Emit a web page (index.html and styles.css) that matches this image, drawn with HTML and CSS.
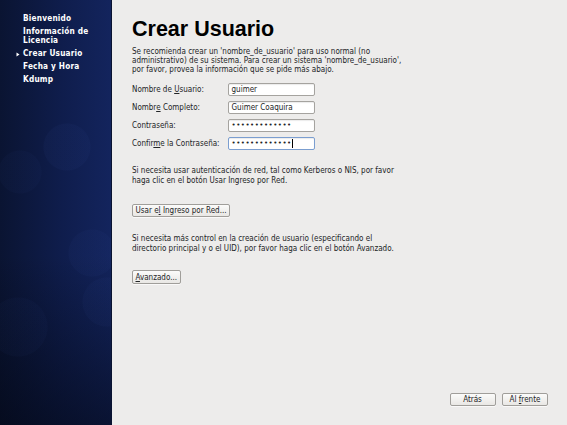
FILE: index.html
```html
<!DOCTYPE html>
<html lang="es">
<head>
<meta charset="utf-8">
<title>Crear Usuario</title>
<link rel="stylesheet" href="styles.css">
</head>
<body>
<div class="app">
  <nav class="sidebar">
    <ul class="steps">
      <li class="step"><span class="mark"></span><span class="step-text">Bienvenido</span></li>
      <li class="step"><span class="mark"></span><span class="step-text">Información de<br>Licencia</span></li>
      <li class="step active"><span class="mark"><svg width="4" height="5" viewBox="0 0 4 5"><path d="M0.5 0.5 L3.5 2.5 L0.5 4.5 Z" fill="#ffffff"/></svg></span><span class="step-text">Crear Usuario</span></li>
      <li class="step"><span class="mark"></span><span class="step-text">Fecha y Hora</span></li>
      <li class="step"><span class="mark"></span><span class="step-text">Kdump</span></li>
    </ul>
  </nav>
  <main class="content">
    <h1 class="title">Crear Usuario</h1>
    <p class="text intro">Se recomienda crear un 'nombre_de_usuario' para uso normal (no<br>administrativo) de su sistema. Para crear un sistema 'nombre_de_usuario',<br>por favor, provea la información que se pide más abajo.</p>
    <div class="form">
      <span class="label">Nombre de <u>U</u>suario:</span>
      <span class="field">guimer</span>
      <span class="label">Nombr<u>e</u> Completo:</span>
      <span class="field">Guimer Coaquira</span>
      <span class="label">Contraseña:</span>
      <span class="field pw">•••••••••••••</span>
      <span class="label">Confir<u>m</u>e la Contraseña:</span>
      <span class="field pw focus">•••••••••••••<span class="caret"></span></span>
    </div>
    <p class="text para2">Si necesita usar autenticación de red, tal como Kerberos o NIS, por favor<br>haga clic en el botón Usar Ingreso por Red.</p>
    <div class="btn-row first"><button class="btn">Usar e<u>l</u> Ingreso por Red...</button></div>
    <p class="text para3">Si necesita más control en la creación de usuario (especificando el<br>directorio principal y o el UID), por favor haga clic en el botón Avanzado.</p>
    <div class="btn-row second"><button class="btn"><u>A</u>vanzado...</button></div>
    <div class="footer">
      <button class="btn nav-btn">Atrás</button>
      <button class="btn nav-btn">Al <u>f</u>rente</button>
    </div>
  </main>
</div>
</body>
</html>
```
FILE: styles.css
```css
* { box-sizing: border-box; }
html, body { margin: 0; padding: 0; }
body {
  width: 567px;
  height: 425px;
  overflow: hidden;
  font-family: "DejaVu Sans Condensed", "DejaVu Sans", sans-serif;
  font-size: 8px;
  color: #222426;
  background: #edeceb;
}
.app {
  display: flex;
  height: 425px;
}
.sidebar {
  width: 112px;
  flex: 0 0 112px;
  height: 425px;
  border-right: 1px solid #0a1331;
  background:
    radial-gradient(circle at 67px 147px, rgba(70,100,190,0.05) 0 23px, transparent 24px),
    radial-gradient(circle at 20px 172px, rgba(70,100,190,0.035) 0 21px, transparent 22px),
    radial-gradient(circle at 92px 253px, rgba(70,100,190,0.045) 0 23px, transparent 24px),
    radial-gradient(circle at 107px 302px, rgba(70,100,190,0.045) 0 24px, transparent 25px),
    radial-gradient(circle at 18px 327px, rgba(70,100,190,0.035) 0 29px, transparent 30px),
    linear-gradient(to bottom, rgba(0,0,0,0) 0%, rgba(0,0,0,0) 60%, rgba(2,5,15,0.55) 100%),
    linear-gradient(to right, #0a1432 0%, #0f1d4c 55%, #13245d 100%);
  padding: 14px 0 0 16px;
}
.steps {
  list-style: none;
  margin: 0;
  padding: 0;
  display: flex;
  flex-direction: column;
  gap: 3.6px;
}
.step {
  display: flex;
  color: #ffffff;
  font-family: "DejaVu Sans Condensed", "DejaVu Sans", sans-serif;
  font-weight: bold;
  font-size: 8.2px;
  line-height: 9.4px;
  letter-spacing: 0.2px;
}
.mark {
  width: 7px;
  flex: 0 0 7px;
  display: flex;
  align-items: center;
  height: 9.4px;
}
.mark svg { display: block; }
.content {
  flex: 1;
  display: flex;
  flex-direction: column;
  padding: 16px 19px 19px 20px;
}
.title {
  margin: 0;
  font-family: "Liberation Sans", Arial, sans-serif;
  font-weight: bold;
  font-size: 21.5px;
  line-height: 26px;
  color: #000;
}
.text {
  margin: 0;
  line-height: 9.3px;
}
.intro { margin-top: 4.5px; }
.form {
  margin-top: 9px;
  display: grid;
  grid-template-columns: 96px 87px;
  row-gap: 4.8px;
  align-items: center;
}
.label { line-height: 13px; }
.field {
  display: flex;
  align-items: center;
  height: 13px;
  padding: 0 2.5px;
  background: #ffffff;
  border: 1px solid #a5a39f;
  border-radius: 2px;
  box-shadow: inset 0 1px 1px rgba(0,0,0,0.08);
  white-space: nowrap;
  overflow: hidden;
}
.pw {
  font-family: "DejaVu Sans", sans-serif;
  font-size: 7px;
  letter-spacing: 0.5px;
}
.focus { border-color: #7b9ed0; }
.caret {
  display: inline-block;
  width: 1px;
  height: 9px;
  background: #000;
}
.para2 { margin-top: 16.5px; }
.btn-row { display: flex; }
.btn-row.first { margin-top: 19px; }
.para3 { margin-top: 17px; }
.btn-row.second { margin-top: 17.5px; }
.btn {
  font-family: "DejaVu Sans Condensed", "DejaVu Sans", sans-serif;
  font-size: 8px;
  color: #222426;
  height: 13.5px;
  padding: 0 2.5px;
  line-height: 11px;
  background: linear-gradient(to bottom, #fbfbfa, #e9e7e4);
  border: 1px solid #a09e9a;
  border-radius: 2px;
  box-shadow: 0 1px 0 rgba(255,255,255,0.7);
}
.footer {
  margin-top: auto;
  display: flex;
  justify-content: flex-end;
  gap: 6.5px;
}
.nav-btn {
  width: 46px;
  text-align: center;
}
```
